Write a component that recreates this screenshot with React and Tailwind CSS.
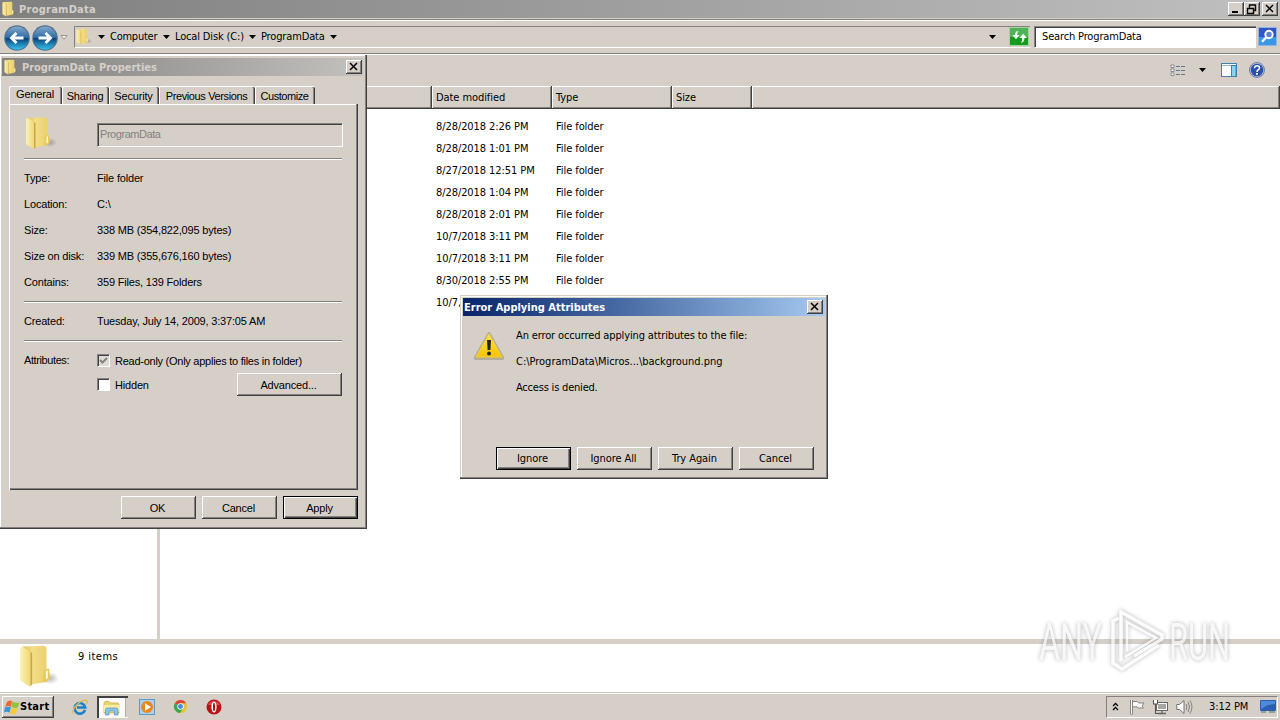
import React from 'react';
import clsx from 'clsx';

const raised = 'bg-[#d5cfc8] shadow-[inset_-1px_-1px_0_#404040,inset_1px_1px_0_#fff,inset_-2px_-2px_0_#858180]';

const rows = [
  '8/28/2018 2:26 PM',
  '8/28/2018 1:01 PM',
  '8/27/2018 12:51 PM',
  '8/28/2018 1:04 PM',
  '8/28/2018 2:01 PM',
  '10/7/2018 3:11 PM',
  '10/7/2018 3:11 PM',
  '8/30/2018 2:55 PM',
];

function Folder({ className }) {
  return (
    <svg viewBox="0 0 32 36" preserveAspectRatio="none" className={clsx('shrink-0', className)}>
      <defs>
        <linearGradient id="folderBack">
          <stop offset="0" stopColor="#e3c25f" />
          <stop offset=".4" stopColor="#f3dd88" />
          <stop offset="1" stopColor="#ecd06c" />
        </linearGradient>
        <linearGradient id="folderFlap">
          <stop offset="0" stopColor="#fbf1b4" />
          <stop offset="1" stopColor="#efd978" />
        </linearGradient>
        <radialGradient id="folderShade">
          <stop offset="0" stopColor="#666" stopOpacity=".45" />
          <stop offset="1" stopColor="#666" stopOpacity="0" />
        </radialGradient>
      </defs>
      <ellipse cx="25" cy="28" rx="7" ry="5" fill="url(#folderShade)" />
      <path d="M3 2L20 1.5L22 3V31L10 33Z" fill="url(#folderBack)" />
      <path d="M20 21L24 20L25 28L22 31L19 31Z" fill="#e6c95f" />
      <path d="M21.5 22L23 21.5V28L21.5 29Z" fill="#fffbe0" />
      <path d="M9 6L10.5 8V33L9 35Z" fill="#c9a742" />
      <path d="M1 3L3 2L9 7V35L1 30Z" fill="url(#folderFlap)" />
    </svg>
  );
}

function Arrow({ className }) {
  return (
    <svg viewBox="0 0 7 4" className={clsx('h-[4px] w-[7px] shrink-0', className)}>
      <path d="M0 0H7L3.5 4Z" fill="#000" />
    </svg>
  );
}

function NavButton({ flip }) {
  return (
    <svg viewBox="0 0 26 26" className={clsx('h-[26px] w-[26px] shrink-0', flip && '-scale-x-100')}>
      <defs>
        <linearGradient id="nav" x2="0" y2="1">
          <stop offset="0" stopColor="#86a8cb" />
          <stop offset=".48" stopColor="#2c6ca6" />
          <stop offset=".52" stopColor="#0b4079" />
          <stop offset="1" stopColor="#35c3ee" />
        </linearGradient>
      </defs>
      <circle cx="13" cy="13" r="12.8" fill="#52718d" />
      <circle cx="13" cy="13" r="11.6" fill="url(#nav)" />
      <path d="M19.5 13H8M12.5 8L7.5 13L12.5 18" fill="none" stroke="#fff" strokeWidth="2.8" />
    </svg>
  );
}

function CaptionButton({ kind, className }) {
  return (
    <div className={clsx('flex h-[14px] w-4 shrink-0 items-center justify-center', raised, className)}>
      <svg viewBox="0 0 16 14" className="h-[14px] w-4" fill="none" stroke="#000">
        {kind === 'min' && <path d="M4 10H10" strokeWidth="2" />}
        {kind === 'restore' && <path d="M5.5 5.5V3H11.5V8.5H9.5M5 3H12M3.5 6.5H9.5V11.5H3.5ZM3 6.5H10" strokeWidth="1.4" />}
        {kind === 'close' && <path d="M4 3L11 10M11 3L4 10" strokeWidth="1.5" />}
      </svg>
    </div>
  );
}

function Button({ children, active, className = 'w-[75px]' }) {
  return (
    <button
      className={clsx(
        'flex h-[23px] shrink-0 items-center justify-center pr-[2px]',
        active
          ? 'bg-[#d5cfc8] shadow-[inset_0_0_0_1px_#000,inset_2px_2px_0_#fff,inset_-2px_-2px_0_#404040,inset_-3px_-3px_0_#858180]'
          : raised,
        className,
      )}
    >
      {children}
    </button>
  );
}

function Rule() {
  return <div className="h-[2px] w-[318px] border-b border-white bg-[#858180]" />;
}

function Field({ label, children }) {
  return (
    <div className="flex h-[26px] items-center">
      <span className="w-[73px] shrink-0 whitespace-nowrap">{label}</span>
      <span className="whitespace-nowrap">{children}</span>
    </div>
  );
}

function Tab({ children, className }) {
  return (
    <div
      className={clsx(
        'flex h-[18px] shrink-0 items-center justify-center whitespace-nowrap rounded-t-[2px] border-l border-t border-white pr-[2px] shadow-[inset_-1px_0_0_#404040,inset_-2px_0_0_#858180]',
        className,
      )}
    >
      {children}
    </div>
  );
}

function Check({ checked }) {
  return (
    <div
      className={clsx(
        'flex h-[13px] w-[13px] shrink-0 items-center justify-center border border-b-white border-l-[#858180] border-r-white border-t-[#858180] shadow-[inset_1px_1px_0_#404040]',
        checked ? 'bg-[#dfdbd5]' : 'bg-white',
      )}
    >
      {checked && (
        <svg viewBox="0 0 9 9" className="h-[9px] w-[9px]">
          <path d="M1 4L3.5 6.5L8 2" fill="none" stroke="#858180" strokeWidth="2" />
        </svg>
      )}
    </div>
  );
}

function PropertiesDialog() {
  return (
    <div className="absolute left-0 top-[55px] flex h-[474px] w-[367px] flex-col bg-[#d5cfc8] pl-[2px] pt-[3px] font-['Liberation_Sans',sans-serif] text-[11px] tracking-[-0.18px] shadow-[inset_-1px_-1px_0_#404040,inset_-2px_-2px_0_#858180,inset_1px_1px_0_#fff]">
      <div className="flex h-[18px] w-[361px] items-center bg-linear-to-r from-[#808080] to-[#c3c1be] pl-[2px] pr-[1px]">
        <Folder className="h-4 w-[15px]" />
        <span className="ml-[3px] mt-px whitespace-nowrap font-['DejaVu_Sans_Condensed','DejaVu_Sans',sans-serif] font-bold tracking-[-0.05px] text-[#d5cfc8]">ProgramData Properties</span>
        <CaptionButton kind="close" className="ml-auto" />
      </div>

      <div className="mt-2 flex h-5 items-end pl-[7px]">
        <Tab className="h-5 w-[53px] pb-1">General</Tab>
        <Tab className="w-[47px]">Sharing</Tab>
        <Tab className="w-[50px]">Security</Tab>
        <Tab className="w-[96px] tracking-[-0.38px]">Previous Versions</Tab>
        <Tab className="w-[60px] tracking-[-0.45px]">Customize</Tab>
      </div>

      <div className="ml-[7px] h-[386px] w-[349px] border-l border-white pl-[14px] pt-[12px] shadow-[inset_-1px_-1px_0_#404040,inset_-2px_-2px_0_#858180,inset_0_1px_0_#fff]">
        <div className="flex h-[42px]">
          <Folder className="ml-[1px] h-[34px] w-[32px]" />
          <div className="ml-[40px] mt-[7px] flex h-6 w-[246px] items-center border border-b-white border-l-[#858180] border-r-white border-t-[#858180] pb-[3px] pl-[2px] tracking-[-0.45px] text-[#858180] shadow-[inset_1px_1px_0_#404040]">
            ProgramData
          </div>
        </div>
        <Rule />
        <div className="mt-[5px]">
          <Field label="Type:">File folder</Field>
          <Field label="Location:">C:\</Field>
          <Field label="Size:">338 MB (354,822,095 bytes)</Field>
          <Field label="Size on disk:">339 MB (355,676,160 bytes)</Field>
          <Field label="Contains:">359 Files, 139 Folders</Field>
        </div>
        <div className="mt-[6px]"><Rule /></div>
        <div className="mt-[5px]">
          <Field label="Created:">Tuesday, July 14, 2009, 3:37:05 AM</Field>
        </div>
        <div className="mt-[6px]"><Rule /></div>
        <div className="mt-[6px] flex">
          <span className="mt-[4px] w-[73px] leading-4 tracking-[-0.4px]">Attributes:</span>
          <div className="w-[245px]">
            <div className="flex h-[25px] items-center">
              <Check checked />
              <span className="ml-[5px] whitespace-nowrap tracking-[-0.26px]">Read-only (Only applies to files in folder)</span>
            </div>
            <div className="flex h-[23px] items-center">
              <Check />
              <span className="ml-[5px]">Hidden</span>
              <Button className="ml-auto w-[105px]">Advanced...</Button>
            </div>
          </div>
        </div>
      </div>

      <div className="mt-[6px] flex justify-end gap-[6px] pr-[9px]">
        <Button>OK</Button>
        <Button>Cancel</Button>
        <Button active>Apply</Button>
      </div>
    </div>
  );
}

function ErrorDialog() {
  return (
    <div className="absolute left-[460px] top-[295px] flex h-[184px] w-[368px] flex-col bg-[#d5cfc8] p-[3px] shadow-[inset_-1px_-1px_0_#404040,inset_-2px_-2px_0_#858180,inset_1px_1px_0_#d5cfc8,inset_2px_2px_0_#fff]">
      <div className="flex h-[18px] items-center bg-linear-to-r from-[#0a246a] to-[#a6caf0] pl-[1px] pr-[2px]">
        <span className="mt-px whitespace-nowrap font-bold tracking-[0px] text-white">Error Applying Attributes</span>
        <CaptionButton kind="close" className="ml-auto" />
      </div>
      <div className="flex h-[131px] pl-[10px] pt-[7px]">
        <svg viewBox="0 0 32 30" className="mt-[8px] h-[30px] w-8 shrink-0">
          <defs>
            <linearGradient id="warn" x2="0" y2="1">
              <stop offset="0" stopColor="#ffe34c" />
              <stop offset="1" stopColor="#f5c400" />
            </linearGradient>
          </defs>
          <path d="M16 1Q17 1 18 3L31 26Q32 29 29 29H3Q0 29 1 26L14 3Q15 1 16 1Z" fill="#b5ad94" />
          <path d="M16 3L29 26H3Z" fill="url(#warn)" stroke="#f4d040" strokeWidth="1" strokeLinejoin="round" />
          <path d="M14 9H18L17.4 19H14.6Z" fill="#222" />
          <circle cx="16" cy="22.5" r="2" fill="#222" />
        </svg>
        <div className="ml-[11px] whitespace-nowrap leading-[26px]">
          <p className="tracking-[-0.13px]">An error occurred applying attributes to the file:</p>
          <p className="tracking-[-0.02px]">C:\ProgramData\Micros...\background.png</p>
          <p className="tracking-[-0.2px]">Access is denied.</p>
        </div>
      </div>
      <div className="flex gap-[6px] pl-[33px]">
        <Button active>Ignore</Button>
        <Button>Ignore All</Button>
        <Button>Try Again</Button>
        <Button>Cancel</Button>
      </div>
    </div>
  );
}

function AddressBar() {
  return (
    <div className="flex h-[35px] shrink-0 items-center border-b border-t border-b-[#858180] border-t-[#858180] bg-[#d5cfc8] pl-[4px] shadow-[inset_0_1px_0_#fff]">
      <div className="mt-[2px] flex gap-[2px]">
        <NavButton />
        <NavButton flip />
      </div>
      <svg viewBox="0 0 8 5" className="ml-[2px] mt-[2px] h-[5px] w-2 shrink-0">
        <path d="M1 .5H7L4 4.3Z" fill="#f6f5f1" stroke="#858180" strokeWidth=".8" />
      </svg>
      <div className="ml-[6px] flex h-[22px] w-[956px] items-center border-b border-l border-t border-b-white border-l-[#858180] border-t-[#858180]">
        <Folder className="ml-[1px] h-[17px] w-[16px]" />
        <Arrow className="ml-[6px] h-[3px] w-[6px]" />
        <span className="ml-[5px] w-[47px] whitespace-nowrap tracking-[-0.25px]">Computer</span>
        <Arrow className="ml-[6px] h-[3px] w-[6px]" />
        <span className="ml-[5px] w-[69px] whitespace-nowrap tracking-[-0.15px]">Local Disk (C:)</span>
        <Arrow className="ml-[5px] h-[3px] w-[6px]" />
        <span className="ml-[5px] w-[65px] whitespace-nowrap tracking-[-0.15px]">ProgramData</span>
        <Arrow className="ml-[4px] h-[3px] w-[6px]" />
        <Arrow className="ml-auto mr-[13px]" />
        <svg viewBox="0 0 20 19" className="mr-px h-[19px] w-5 shrink-0">
          <rect width="20" height="19" fill="#a7d2a0" />
          <rect x="1" y="1" width="18" height="17" fill="#4fb457" />
          <path d="M1 10H19V18H1Z" fill="#159b1f" />
          <path d="M9.5 4Q6 4 6 8H3.2L7 12.2L10.5 8H8.2Q8 6 9.5 4Z" fill="#f2fff0" />
          <path d="M12 16Q15.6 15 15.4 11H18L14.2 6.8L10.4 11H13Q13.3 13.5 12 16Z" fill="#f2fff0" />
        </svg>
      </div>
      <div className="ml-[4px] flex h-[22px] w-[222px] items-center border-b border-l border-t border-b-white border-l-[#858180] border-t-[#858180] bg-white pl-[7px] pt-px tracking-[-0.15px] shadow-[inset_1px_1px_0_#404040]">
        Search ProgramData
      </div>
      <svg viewBox="0 0 19 19" className="ml-[2px] h-[19px] w-[19px] shrink-0">
        <rect width="19" height="19" fill="#91b4e2" />
        <rect x="1" y="1" width="17" height="9" fill="#3156c4" />
        <rect x="1" y="10" width="17" height="8" fill="#3c98e5" />
        <circle cx="11" cy="7.5" r="3.7" fill="#5c7fdb" stroke="#fff" strokeWidth="1.9" />
        <path d="M8.3 10.3L4 14.7" stroke="#fff" strokeWidth="2.3" />
      </svg>
    </div>
  );
}

function Toolbar() {
  return (
    <div className="flex h-[32px] shrink-0 items-center justify-end border-t border-white bg-[#d5cfc8] pb-px pr-[15px]">
      <svg viewBox="0 0 16 12" className="h-3 w-4" fill="none">
        <path d="M1 1H4V3.5H1ZM1 5H4V7.5H1ZM1 9H4V11.5H1Z" fill="#fff" stroke="#7d8287" strokeWidth=".9" />
        <path d="M6 2.5H10M11 2.5H15M6 6.5H10M11 6.5H15M6 10.5H10M11 10.5H15" stroke="#66768a" />
      </svg>
      <Arrow className="ml-[13px]" />
      <svg viewBox="0 0 16 14" className="ml-[15px] h-[14px] w-4">
        <rect x=".5" y=".5" width="15" height="13" fill="#fff" stroke="#4182a7" />
        <path d="M1 2.5H15" stroke="#8fb5cd" />
        <rect x="10.5" y="2.5" width="4.5" height="11" fill="#8bd3ee" stroke="#4182a7" />
      </svg>
      <svg viewBox="0 0 16 16" className="ml-[12px] h-4 w-4">
        <circle cx="8" cy="8" r="7.5" fill="#b9c3dc" stroke="#7181a5" />
        <circle cx="8" cy="8" r="6.3" fill="#2c50ad" />
        <path d="M5.5 6.3Q5.7 3.8 8 3.8Q10.6 3.8 10.5 6Q10.4 7.2 9 8Q8 8.6 8 10" fill="none" stroke="#fff" strokeWidth="1.5" />
        <path d="M7 11H9V12.8H7Z" fill="#fff" />
      </svg>
    </div>
  );
}

function HeaderCell({ children, className }) {
  return (
    <div className={clsx('flex h-[23px] shrink-0 items-center pl-[4px] pt-px', raised, className)}>
      {children}
    </div>
  );
}

function Watermark() {
  return (
    <svg
      viewBox="0 0 200 76"
      className="absolute left-[1035px] top-[602px] h-[76px] w-[200px] overflow-visible opacity-75 drop-shadow-[0_0_2px_rgba(90,90,90,0.6)]"
    >
      <g fill="#f6f6f6" fontFamily="Roboto, sans-serif" fontSize="51">
        <text x="4" y="58" textLength="63" lengthAdjust="spacingAndGlyphs">ANY</text>
        <text x="134" y="58" textLength="61" lengthAdjust="spacingAndGlyphs">RUN</text>
      </g>
      <g fill="none" stroke="#fbfbfb" strokeWidth="3.5">
        <path d="M84 16L78 19V61L87 67L124 43" />
        <path d="M86 59V10L127 33V37L99 54" />
        <path d="M92 49V20L121 36L90 55" strokeWidth="2.5" />
      </g>
    </svg>
  );
}

function Taskbar() {
  return (
    <div className="flex h-[28px] shrink-0 items-center border-t border-[#c9c5bd] bg-[#d5cfc8] pl-[2px] shadow-[inset_0_1px_0_#fff]">
      <div className={clsx('flex h-[22px] w-[52px] items-center pl-[2px] font-bold', raised)}>
        <svg viewBox="0 0 16 16" className="h-4 w-4 shrink-0">
          <path d="M3 3Q5.5 .5 8 2L7 8Q4.5 6 1 8Z" fill="#ec682f" />
          <path d="M8.5 2.3Q12 5 15.5 3L13.8 8.5Q11 9.5 7.5 8.2Z" fill="#8cc43c" />
          <path d="M.8 8.5Q4 7 6.9 8.5L5.5 13.8Q3 12 0 13.5Z" fill="#3a95de" />
          <path d="M7.4 8.8Q10.5 10.5 13.5 9L12 14.5Q9 16 6 14.2Z" fill="#fbc932" />
        </svg>
        <span className="tracking-[0.25px]">Start</span>
      </div>
      <svg viewBox="0 0 16 16" className="ml-[18px] h-4 w-4">
        <path d="M13 11A5.3 5.3 0 1 1 13.2 8.5H5" fill="none" stroke="#1f7fcb" strokeWidth="2.6" />
        <path d="M1.5 14.5C-1 9 11-1 15 1.8C16 3 14 5 14 5" fill="none" stroke="#e2bd3e" strokeWidth="1.4" />
      </svg>
      <div className="ml-[9px] flex h-[22px] w-[31px] items-center border-l-2 border-t-2 border-[#404040] bg-[#fbfaf8] pl-[4px]">
        <svg viewBox="0 0 18 16" className="h-4 w-[18px]">
          <path d="M1 3L2 1.5H6L7.5 3H15L16 4V13H1Z" fill="#ead56e" stroke="#c9a940" strokeWidth=".7" />
          <path d="M1 5H17V12H1Z" fill="#f8eda3" />
          <path d="M2.5 15V10Q2.5 8 4.5 8H13Q15 8 15 10V15H11.5V11H6V15Z" fill="#8cc6ea" stroke="#4e8fbb" strokeWidth=".7" />
        </svg>
        <div className="ml-auto h-[19px] w-[3px] border-l border-[#b5b0a8] bg-[#d5cfc8]" />
      </div>
      <svg viewBox="0 0 16 16" className="ml-[11px] h-4 w-4">
        <rect x=".5" y=".5" width="15" height="15" fill="#a8d2ee" stroke="#5b9bc6" />
        <circle cx="8" cy="8" r="6" fill="#ef861b" />
        <path d="M6 4.2L12 8L6 11.8Z" fill="#fff" />
      </svg>
      <svg viewBox="0 0 16 16" className="ml-[18px] h-[15px] w-[15px]">
        <circle cx="8" cy="8" r="7" fill="#e4c72d" />
        <path d="M8 8L1.9 4.5A7 7 0 0 1 14.1 4.5H8Z" fill="#db4437" />
        <path d="M1.9 4.5A7 7 0 0 0 7.5 15L11 9.5L8 8Z" fill="#35a653" />
        <circle cx="8" cy="8" r="3.4" fill="#fff" />
        <circle cx="8" cy="8" r="2.6" fill="#4285f4" />
      </svg>
      <svg viewBox="0 0 16 16" className="ml-[18px] h-4 w-4">
        <circle cx="8" cy="8" r="7.5" fill="#bb1118" />
        <path d="M2 6A6.5 6.5 0 0 1 14 6Z" fill="#d8444a" />
        <ellipse cx="8" cy="8" rx="2.6" ry="5.5" fill="#fff" />
        <ellipse cx="8" cy="8" rx="1" ry="4.3" fill="#9d0b12" />
      </svg>

      <div className="ml-auto mr-[2px] flex h-[22px] w-[172px] items-center border-b border-l border-r border-t border-b-white border-l-[#858180] border-r-white border-t-[#858180] pl-[5px]">
        <svg viewBox="0 0 7 9" className="h-[9px] w-[7px]">
          <path d="M1 4L3.5 1.5L6 4M1 8L3.5 5.5L6 8" fill="none" stroke="#000" strokeWidth="1.3" />
        </svg>
        <svg viewBox="0 0 16 16" className="ml-[10px] h-4 w-4">
          <path d="M2.5 1V15.5" stroke="#666" strokeWidth="2.4" />
          <path d="M2.5 1V15" stroke="#fff" />
          <path d="M3.5 2.5H8.5L9.5 4H15L13 7L14.5 9H9L8 7.8H3.5Z" fill="#fff" stroke="#777" strokeWidth=".9" />
        </svg>
        <svg viewBox="0 0 17 16" className="ml-[7px] h-4 w-[17px]">
          <rect x="4.5" y="3.5" width="11" height="8" fill="#aaa59f" stroke="#666" />
          <rect x="5.5" y="4.5" width="9" height="6" fill="none" stroke="#fff" />
          <path d="M6 14.5H14M10 12V14" stroke="#666" strokeWidth="1.3" />
          <path d="M1 1H6V5H1Z" fill="#fff" />
          <path d="M1.5 1V5H5.5V1M3.5 5V14.5H6" fill="none" stroke="#555" strokeWidth="1.1" />
        </svg>
        <svg viewBox="0 0 17 16" className="ml-[7px] h-4 w-[17px]">
          <path d="M.8 5.5H3.5L8 1.5V14.5L3.5 10.5H.8Z" fill="#fff" stroke="#666" strokeWidth=".9" />
          <path d="M10 5Q12 8 10 11M12 3Q15 8 12 13M14 1.5Q18 8 14 14.5" fill="none" stroke="#777" strokeWidth=".9" />
        </svg>
        <span className="ml-[16px] mt-px w-[43px] whitespace-nowrap">3:12 PM</span>
        <svg viewBox="0 0 16 13" className="ml-[8px] h-[13px] w-4">
          <rect width="16" height="11" rx="1" fill="#2d5eb0" />
          <path d="M1 1H15V4Q8 4 1 9Z" fill="#4c8bda" />
          <path d="M1 12H6M9 12H15" stroke="#476" />
        </svg>
      </div>
    </div>
  );
}

export default function App() {
  return (
    <div className="relative flex h-[720px] w-[1280px] flex-col overflow-hidden bg-white font-['DejaVu_Sans_Condensed','DejaVu_Sans',sans-serif] text-[11px] leading-[14px] tracking-[-0.08px] text-black">
      <div className="flex h-[19px] shrink-0 items-center border-b border-[#d5cfc8] bg-linear-to-r from-[#808080] to-[#c0c0c0] pl-[2px] pr-[2px]">
        <Folder className="h-4 w-[15px]" />
        <span className="ml-[2px] mt-px font-bold tracking-[0.25px] text-[#d5cfc8]">ProgramData</span>
        <div className="ml-auto flex">
          <CaptionButton kind="min" />
          <CaptionButton kind="restore" />
          <CaptionButton kind="close" className="ml-[2px]" />
        </div>
      </div>
      <AddressBar />
      <Toolbar />

      <div className="flex h-[23px] shrink-0">
        <HeaderCell className="w-[432px]" />
        <HeaderCell className="w-[120px]">Date modified</HeaderCell>
        <HeaderCell className="w-[120px]">Type</HeaderCell>
        <HeaderCell className="w-[80px]">Size</HeaderCell>
        <HeaderCell className="w-[528px]" />
      </div>

      <div className="flex h-[530px] shrink-0">
        <div className="w-[160px] border-r-[3px] border-[#d5cfc8]" />
        <div className="flex flex-col pl-[276px] pt-[7px]">
          {rows.map((date, i) => (
            <div key={i} className="flex h-[22px] items-center whitespace-nowrap">
              <span className="w-[120px]">{date}</span>
              <span>File folder</span>
            </div>
          ))}
          {/* the rest of this row sits under the error dialog */}
          <div className="flex h-[22px] w-[24px] items-center overflow-hidden">10/7,</div>
        </div>
      </div>

      <div className="flex h-[53px] shrink-0 border-t-[5px] border-[#d5cfc8] pl-[19px]">
        <Folder className="h-[44px] w-[40px]" />
        <span className="ml-[19px] mt-[6px] tracking-[0.45px]">9 items</span>
      </div>
      <Taskbar />

      <PropertiesDialog />
      <ErrorDialog />
      <Watermark />
    </div>
  );
}
